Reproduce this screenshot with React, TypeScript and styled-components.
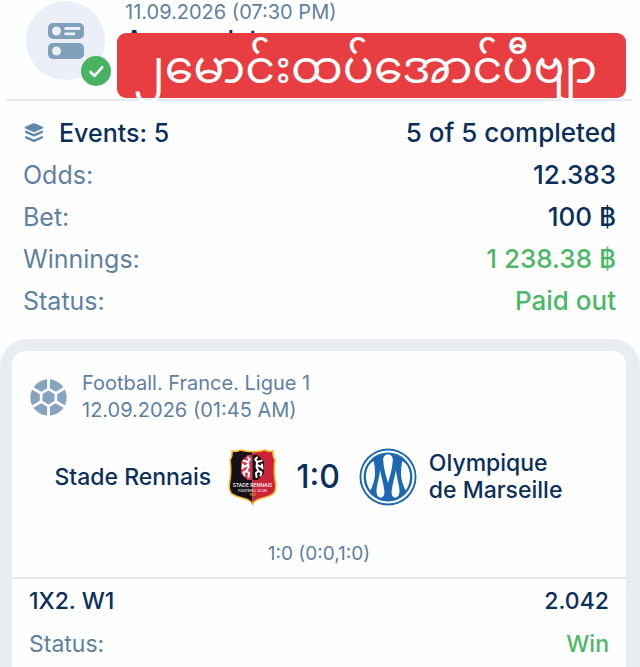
import React from "react";
import styled, { createGlobalStyle } from "styled-components";

const GlobalStyle = createGlobalStyle`
  *, *::before, *::after { box-sizing: border-box; }
  body {
    margin: 0;
    background: #fefefe;
    color: #0b2f5b;
    font-family: Inter, "Liberation Sans", sans-serif;
  }
`;

const Page = styled.main`
  display: flex;
  flex-direction: column;
  min-height: 100vh;
`;

const CouponHeader = styled.header`
  position: relative;
  display: flex;
  gap: 20px;
  height: 101px;
  margin: 0 8px 0 6px;
  padding-left: 20px;
  border-bottom: 2px solid #e6e9ee;
`;

const TypeIcon = styled.div`
  position: relative;
  flex: none;
  display: grid;
  place-items: center;
  width: 79px;
  height: 79px;
  margin-top: 1px;
  border-radius: 50%;
  background: #eceff7;
`;

const DoneBadge = styled.span`
  position: absolute;
  right: -6px;
  bottom: -6px;
  display: grid;
  place-items: center;
  width: 30px;
  height: 30px;
  border-radius: 50%;
  background: #48b362;
`;

const HeaderText = styled.div`
  display: flex;
  flex-direction: column;
`;

const Muted = styled.span<{ $size?: number; $line?: number }>`
  color: #5f819f;
  font-size: ${(p) => p.$size ?? 20}px;
  line-height: ${(p) => p.$line ?? 24}px;
`;

const CouponTitle = styled.h1`
  margin: 0;
  font-size: 26px;
  font-weight: 500;
  line-height: 32px;
`;

const Banner = styled.div`
  position: absolute;
  top: 33px;
  left: 111px;
  right: 6px;
  display: flex;
  align-items: center;
  justify-content: center;
  height: 65px;
  padding-right: 12px;
  border-radius: 9px;
  background: #e83e41;
  color: #fff;
  font-family: Inter, "Noto Sans Myanmar", "Noto Sans", sans-serif;
  font-size: 46px;
  line-height: 60px;
  white-space: nowrap;
`;

const Summary = styled.dl`
  margin: 0;
  padding: 11px 24px 17px 23px;
`;

const SummaryRow = styled.div`
  display: flex;
  justify-content: space-between;
  font-size: 26px;
  line-height: 42px;
`;

const Label = styled.dt<{ $strong?: boolean }>`
  display: flex;
  align-items: center;
  gap: 14px;
  color: ${(p) => (p.$strong ? "inherit" : "#5f819f")};
  font-weight: ${(p) => (p.$strong ? 500 : 400)};
`;

const SummaryLabel = styled(Label)`
  font-size: 25px;
`;

const Value = styled.dd<{ $good?: boolean }>`
  margin: 0;
  color: ${(p) => (p.$good ? "#4cb768" : "inherit")};
  font-weight: 500;
`;

const EventsPanel = styled.section`
  flex: 1;
  display: flex;
  padding: 12px 14px 0 12px;
  border-radius: 28px 28px 0 0;
  background: #e9edf2;
`;

const EventCard = styled.article`
  flex: 1;
  border-radius: 14px 14px 0 0;
  background: #fefefe;
`;

const EventHeader = styled.div`
  display: flex;
  align-items: center;
  gap: 15px;
  padding: 19px 17px 0 18px;
`;

const EventMeta = styled.div`
  display: flex;
  flex-direction: column;
`;

const Match = styled.div`
  display: grid;
  grid-template-columns: 1fr auto 1fr;
  align-items: center;
  gap: 19px;
  height: 60px;
  margin-top: 23px;
  padding-right: 2px;
`;

const Team = styled.div<{ $away?: boolean }>`
  display: flex;
  align-items: center;
  justify-content: ${(p) => (p.$away ? "flex-start" : "flex-end")};
  gap: ${(p) => (p.$away ? 12 : 17)}px;
  font-size: 23px;
  font-weight: 500;
  line-height: 27px;
`;

const Score = styled.strong`
  font-size: 32px;
  font-weight: 500;
  line-height: 40px;
`;

const Periods = styled.div`
  margin-top: 35px;
  padding-bottom: 11px;
  border-bottom: 2px solid #e6e9ee;
  text-align: center;
`;

const BetDetails = styled.dl`
  margin: 0;
  padding: 1px 17px 0;
`;

const BetRow = styled(SummaryRow)`
  font-size: 23px;
  line-height: 43px;
`;

const CouponGlyph = () => (
  <svg width="36" height="36" viewBox="0 0 36 36" aria-hidden="true">
    <rect width="36" height="16" rx="5" fill="#7f9fbb" />
    <rect y="20" width="36" height="16" rx="5" fill="#7f9fbb" />
    <circle cx="8.5" cy="8" r="4.5" fill="#eceff7" />
    <circle cx="8.5" cy="28" r="4.5" fill="#eceff7" />
    <path d="M17.5 5.5H31M17.5 10.8H26" stroke="#eceff7" strokeWidth="2.8" strokeLinecap="round" />
  </svg>
);

const CheckGlyph = () => (
  <svg width="30" height="30" viewBox="0 0 30 30" fill="none" aria-hidden="true">
    <path d="M9.5 16l4 3.8 7.8-8.6" stroke="#fff" strokeWidth="2.6" strokeLinecap="round" strokeLinejoin="round" />
  </svg>
);

const LayersGlyph = () => (
  <svg width="22" height="22" viewBox="0 0 22 22" fill="#5f87ab" aria-hidden="true">
    <path d="M11 1.2q.6 0 1.2.3l7.5 3.3q1.2.8 0 1.600l-7.500 3.300q-1.200.5-2.400 0L2.300 6.400q-1.200-.8 0-1.600l7.500-3.300q.6-.3 1.200-.3z" />
    <path d="M2 9q.5-.6 1.500-.2l6.300 2.700q1.200.5 2.400 0l6.300-2.700q1-.4 1.500.2.500 1.200-.8 2l-7 3.200q-1.200.5-2.400 0l-7-3.200Q1.500 10.200 2 9z" />
    <path d="M2 14.500q.5-.6 1.500-.2l6.300 2.700q1.200.5 2.400 0l6.300-2.700q1-.4 1.500.2.500 1.200-.8 2l-7 3.200q-1.200.5-2.400 0l-7-3.200Q1.500 15.700 2 14.500z" />
  </svg>
);

const BallGlyph = () => (
  <svg width="37" height="37" viewBox="0 0 37 37" aria-hidden="true">
    <circle cx="18.5" cy="18.5" r="18.2" fill="#86a4bf" />
    <path
      d="M18.5 0v10M18.500 27v10M11 14.200L2.500 9.300M26 14.200l8.500-4.900M11 22.800l-8.500 4.900M26 22.800l8.500 4.900"
      stroke="#fefefe"
      strokeWidth="2.800"
    />
    <path
      d="M18.500 8.500l3.500 2.500h-7zM18.500 28.500l3.500-2.500h-7zM9.500 13.300l4 .2-3 4zM27.500 13.300l-4 .2 3 4zM9.500 23.700l4-.2-3-4zM27.500 23.700l-4-.2 3-4z"
      fill="#fefefe"
    />
    <path d="M18.500 10l7.400 4.300v8.400L18.500 27l-7.400-4.300v-8.400z" fill="#86a4bf" stroke="#fefefe" strokeWidth="2.600" strokeLinejoin="round" />
  </svg>
);

const RennesCrest = () => (
  <svg width="49" height="57" viewBox="0 0 49 57" role="img" aria-label="Stade Rennais crest">
    <defs>
      <clipPath id="crest">
        <path d="M4 2q5 1 8-1 12.500 3.500 25 0 3 2 8 1-.5 6 2 9-1.500 9 0 20 2 8-1 13-3 3-11.500 5-7.500 1.500-10 6-2.500-4.500-10-6-8.500-2-11.500-5-3-5-1-13 1.500-11 0-20 2.500-3 2-9z" />
      </clipPath>
    </defs>
    <g clipPath="url(#crest)">
      <path d="M0 0h24.500v57H0z" fill="#161116" />
      <path d="M24.500 0H49v57H24.500z" fill="#c92438" />
    </g>
    <path
      d="M4 2q5 1 8-1 12.500 3.500 25 0 3 2 8 1-.5 6 2 9-1.500 9 0 20 2 8-1 13-3 3-11.500 5-7.500 1.500-10 6-2.500-4.500-10-6-8.500-2-11.500-5-3-5-1-13 1.500-11 0-20 2.500-3 2-9z"
      fill="none"
      stroke="#f6b62c"
      strokeWidth="1.600"
    />
    <path d="M19.500 6h5v25h-5L13 24.500V12.500z" fill="#d9344b" />
    <path d="M24.500 6h5l6.500 6.500v12L29.500 31h-5z" fill="#161116" />
    <g fill="none" stroke="#fff" strokeWidth="2" strokeLinecap="round" strokeLinejoin="round">
      <path d="M20 8.500l1.800 2-1.800 2.500.5 5-2 4 2.500 2-.5 4M20 13l-4.500-1.200M20 16l-4.500 2M18.500 22l-3 1.500 1 3M15 15.500l-.5 4" />
      <path d="M29 8.500l-1.800 2 1.800 2.500-.5 5 2 4-2.500 2 .5 4M29 13l4.500-1.200M29 16l4.500 2M30.500 22l3 1.500-1 3M34 15.500l.5 4" />
    </g>
    <g fill="#fff" textAnchor="middle" fontFamily="Inter, sans-serif" fontWeight="500">
      <text x="24.500" y="38" fontSize="5">STADE RENNAIS</text>
      <text x="24.500" y="42.500" fontSize="3.500">FOOTBALL CLUB</text>
      <text x="24.500" y="47" fontSize="3" fill="#f4b52e">1901</text>
    </g>
  </svg>
);

const MarseilleCrest = () => (
  <svg width="58" height="58" viewBox="0 0 58 58" role="img" aria-label="Olympique de Marseille crest">
    <circle cx="29" cy="29" r="28.5" fill="#1d68b3" />
    <circle cx="29" cy="29" r="25.5" fill="none" stroke="#fff" strokeWidth="2.2" />
    <g fill="#fff">
      <path d="M14.500 13C9 16.500 7 22.500 7 28.500c0 5.500 1.500 10 4.500 14 2.500-5.500 4.500-11 4.500-17 0-5-.5-9-1.500-12.500z" />
      <path d="M43.500 13c5.500 3.500 7.500 9.500 7.500 15.500 0 5.500-1.500 10-4.500 14-2.500-5.500-4.500-11-4.500-17 0-5 .5-9 1.500-12.500z" />
      <path d="M29 6.500c-3.400 0-5 2.400-4.800 6 .4 7.500 2.800 15.500 4.800 22.500 2-7 4.400-15 4.800-22.500.2-3.600-1.400-6-4.800-6z" />
      <path d="M21 22c-.5 8-3.500 15-3.500 21.500 0 3.700 1.800 6 4.200 6s4-2.300 3.700-6C24.800 37 22.500 30 21 22z" />
      <path d="M37 22c.5 8 3.500 15 3.500 21.500 0 3.700-1.800 6-4.200 6s-4-2.300-3.700-6c.6-6.500 2.900-13.500 4.400-21.500z" />
    </g>
  </svg>
);

const summary = [
  { label: "Odds:", value: "12.383" },
  { label: "Bet:", value: "100 ฿" },
  { label: "Winnings:", value: "1 238.38 ฿", good: true },
  { label: "Status:", value: "Paid out", good: true },
];

export default function App() {
  return (
    <Page>
      <GlobalStyle />
      <CouponHeader>
        <TypeIcon>
          <CouponGlyph />
          <DoneBadge>
            <CheckGlyph />
          </DoneBadge>
        </TypeIcon>
        <HeaderText>
          <Muted>11.09.2026 (07:30 PM)</Muted>
          <CouponTitle>Accumulator</CouponTitle>
        </HeaderText>
        <Banner lang="my">၂မောင်းထပ်အောင်ပီဗျာ</Banner>
      </CouponHeader>

      <Summary>
        <SummaryRow>
          <SummaryLabel $strong>
            <LayersGlyph />
            Events: 5
          </SummaryLabel>
          <Value>5 of 5 completed</Value>
        </SummaryRow>
        {summary.map((row) => (
          <SummaryRow key={row.label}>
            <SummaryLabel>{row.label}</SummaryLabel>
            <Value $good={row.good}>{row.value}</Value>
          </SummaryRow>
        ))}
      </Summary>

      <EventsPanel>
        <EventCard>
          <EventHeader>
            <BallGlyph />
            <EventMeta>
              <Muted $line={27}>Football. France. Ligue 1</Muted>
              <Muted $line={27}>12.09.2026 (01:45 AM)</Muted>
            </EventMeta>
          </EventHeader>
          <Match>
            <Team>
              Stade Rennais
              <RennesCrest />
            </Team>
            <Score>1:0</Score>
            <Team $away>
              <MarseilleCrest />
              <span>
                Olympique
                <br />
                de Marseille
              </span>
            </Team>
          </Match>
          <Periods>
            <Muted $size={19}>1:0 (0:0,1:0)</Muted>
          </Periods>
          <BetDetails>
            <BetRow>
              <Label $strong>1X2. W1</Label>
              <Value>2.042</Value>
            </BetRow>
            <BetRow>
              <Label>Status:</Label>
              <Value $good>Win</Value>
            </BetRow>
          </BetDetails>
        </EventCard>
      </EventsPanel>
    </Page>
  );
}
